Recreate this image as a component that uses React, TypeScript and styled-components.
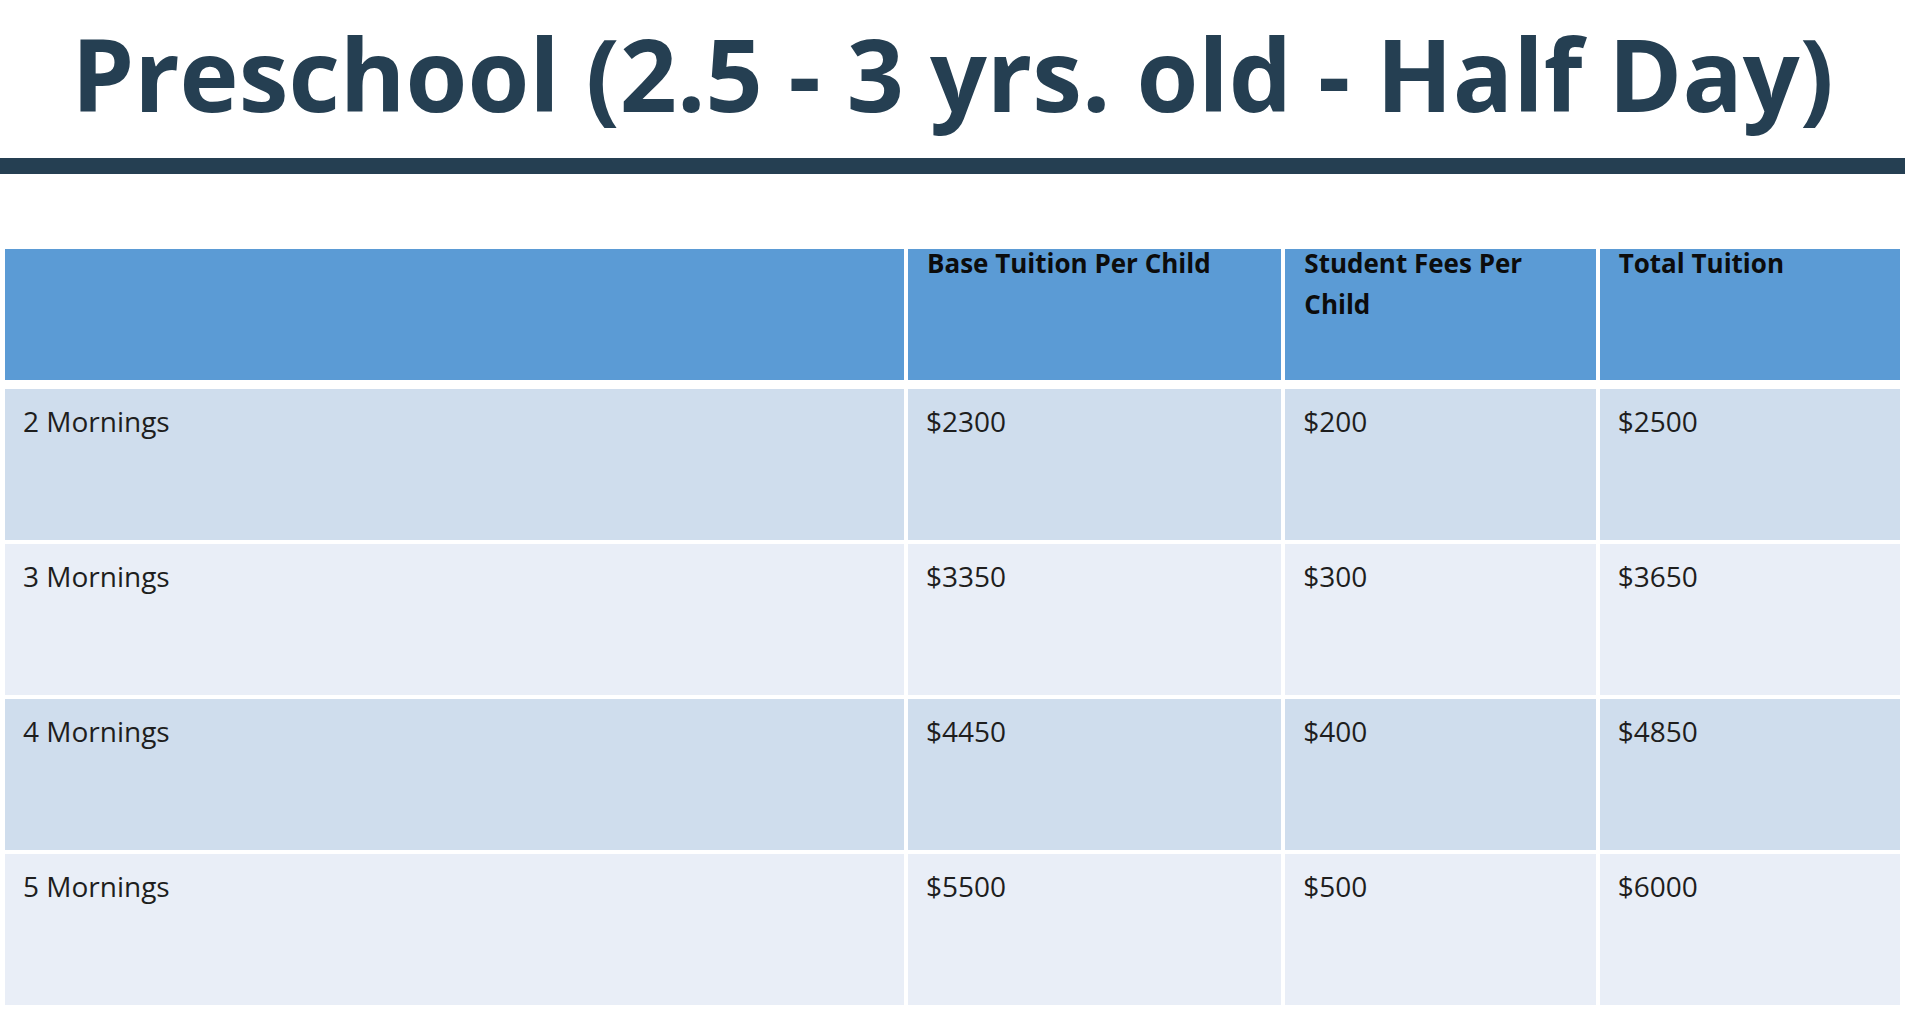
import React from 'react';
import styled, {createGlobalStyle} from 'styled-components';

type Row = {label: string; base: string; fees: string; total: string};

const rows: Row[] = [
  {label: '2 Mornings', base: '$2300', fees: '$200', total: '$2500'},
  {label: '3 Mornings', base: '$3350', fees: '$300', total: '$3650'},
  {label: '4 Mornings', base: '$4450', fees: '$400', total: '$4850'},
  {label: '5 Mornings', base: '$5500', fees: '$500', total: '$6000'},
];

const headings = ['', 'Base Tuition Per Child', 'Student Fees Per Child', 'Total Tuition'];

const App: React.FC = () => (
  <>
    <GlobalStyle />
    <Page>
      <Header>
        <Title>Preschool (2.5 - 3 yrs. old - Half Day)</Title>
        <Rule />
      </Header>
      <Table>
        {headings.map((h, i) => (
          <HeadCell key={`h${i}`}>
            <HeadLabel>{h}</HeadLabel>
          </HeadCell>
        ))}
        {rows.map((r, i) =>
          [r.label, r.base, r.fees, r.total].map((v, j) => (
            <Cell key={`${i}-${j}`} $striped={i % 2 === 0}>
              {v}
            </Cell>
          ))
        )}
      </Table>
    </Page>
  </>
);
App.displayName = 'App';

export default App;

const GlobalStyle = createGlobalStyle`
  html, body {
    margin: 0;
    padding: 0;
    background: #fff;
  }
  body {
    font-family: 'Open Sans', 'Noto Sans', sans-serif;
    overflow: hidden;
  }
`;

const Page = styled.div`
  display: flex;
  flex-direction: column;
  width: 1905px;
  height: 1010px;
`;

const Header = styled.header`
  display: flex;
  flex-direction: column;
  padding-top: 23px;
`;

const Title = styled.h1`
  margin: 0;
  font-size: 100px;
  line-height: 100px;
  font-weight: 700;
  color: #253f52;
  text-align: center;
  white-space: nowrap;
`;

const Rule = styled.div`
  height: 16px;
  margin-top: 35px;
  background-color: #253f52;
`;

const Table = styled.div`
  display: grid;
  grid-template-columns: 898fr 373fr 310fr 300fr;
  grid-template-rows: 136px repeat(4, 151px);
  column-gap: 4px;
  row-gap: 4px;
  margin: 75px 5px 0 5px;
`;

const HeadCell = styled.div`
  background-color: #5b9bd5;
  padding: 0 16px 0 19px;
  margin-bottom: 5px;
`;

const HeadLabel = styled.div`
  margin-top: -6px;
  font-size: 26px;
  line-height: 41px;
  font-weight: 700;
  color: #0c0c0c;
`;

const Cell = styled.div<{$striped: boolean}>`
  background-color: ${p => (p.$striped ? '#cfdded' : '#e9eef7')};
  padding: 14px 16px 0 18px;
  font-size: 28px;
  line-height: 36px;
  color: #1e1e1e;
`;
